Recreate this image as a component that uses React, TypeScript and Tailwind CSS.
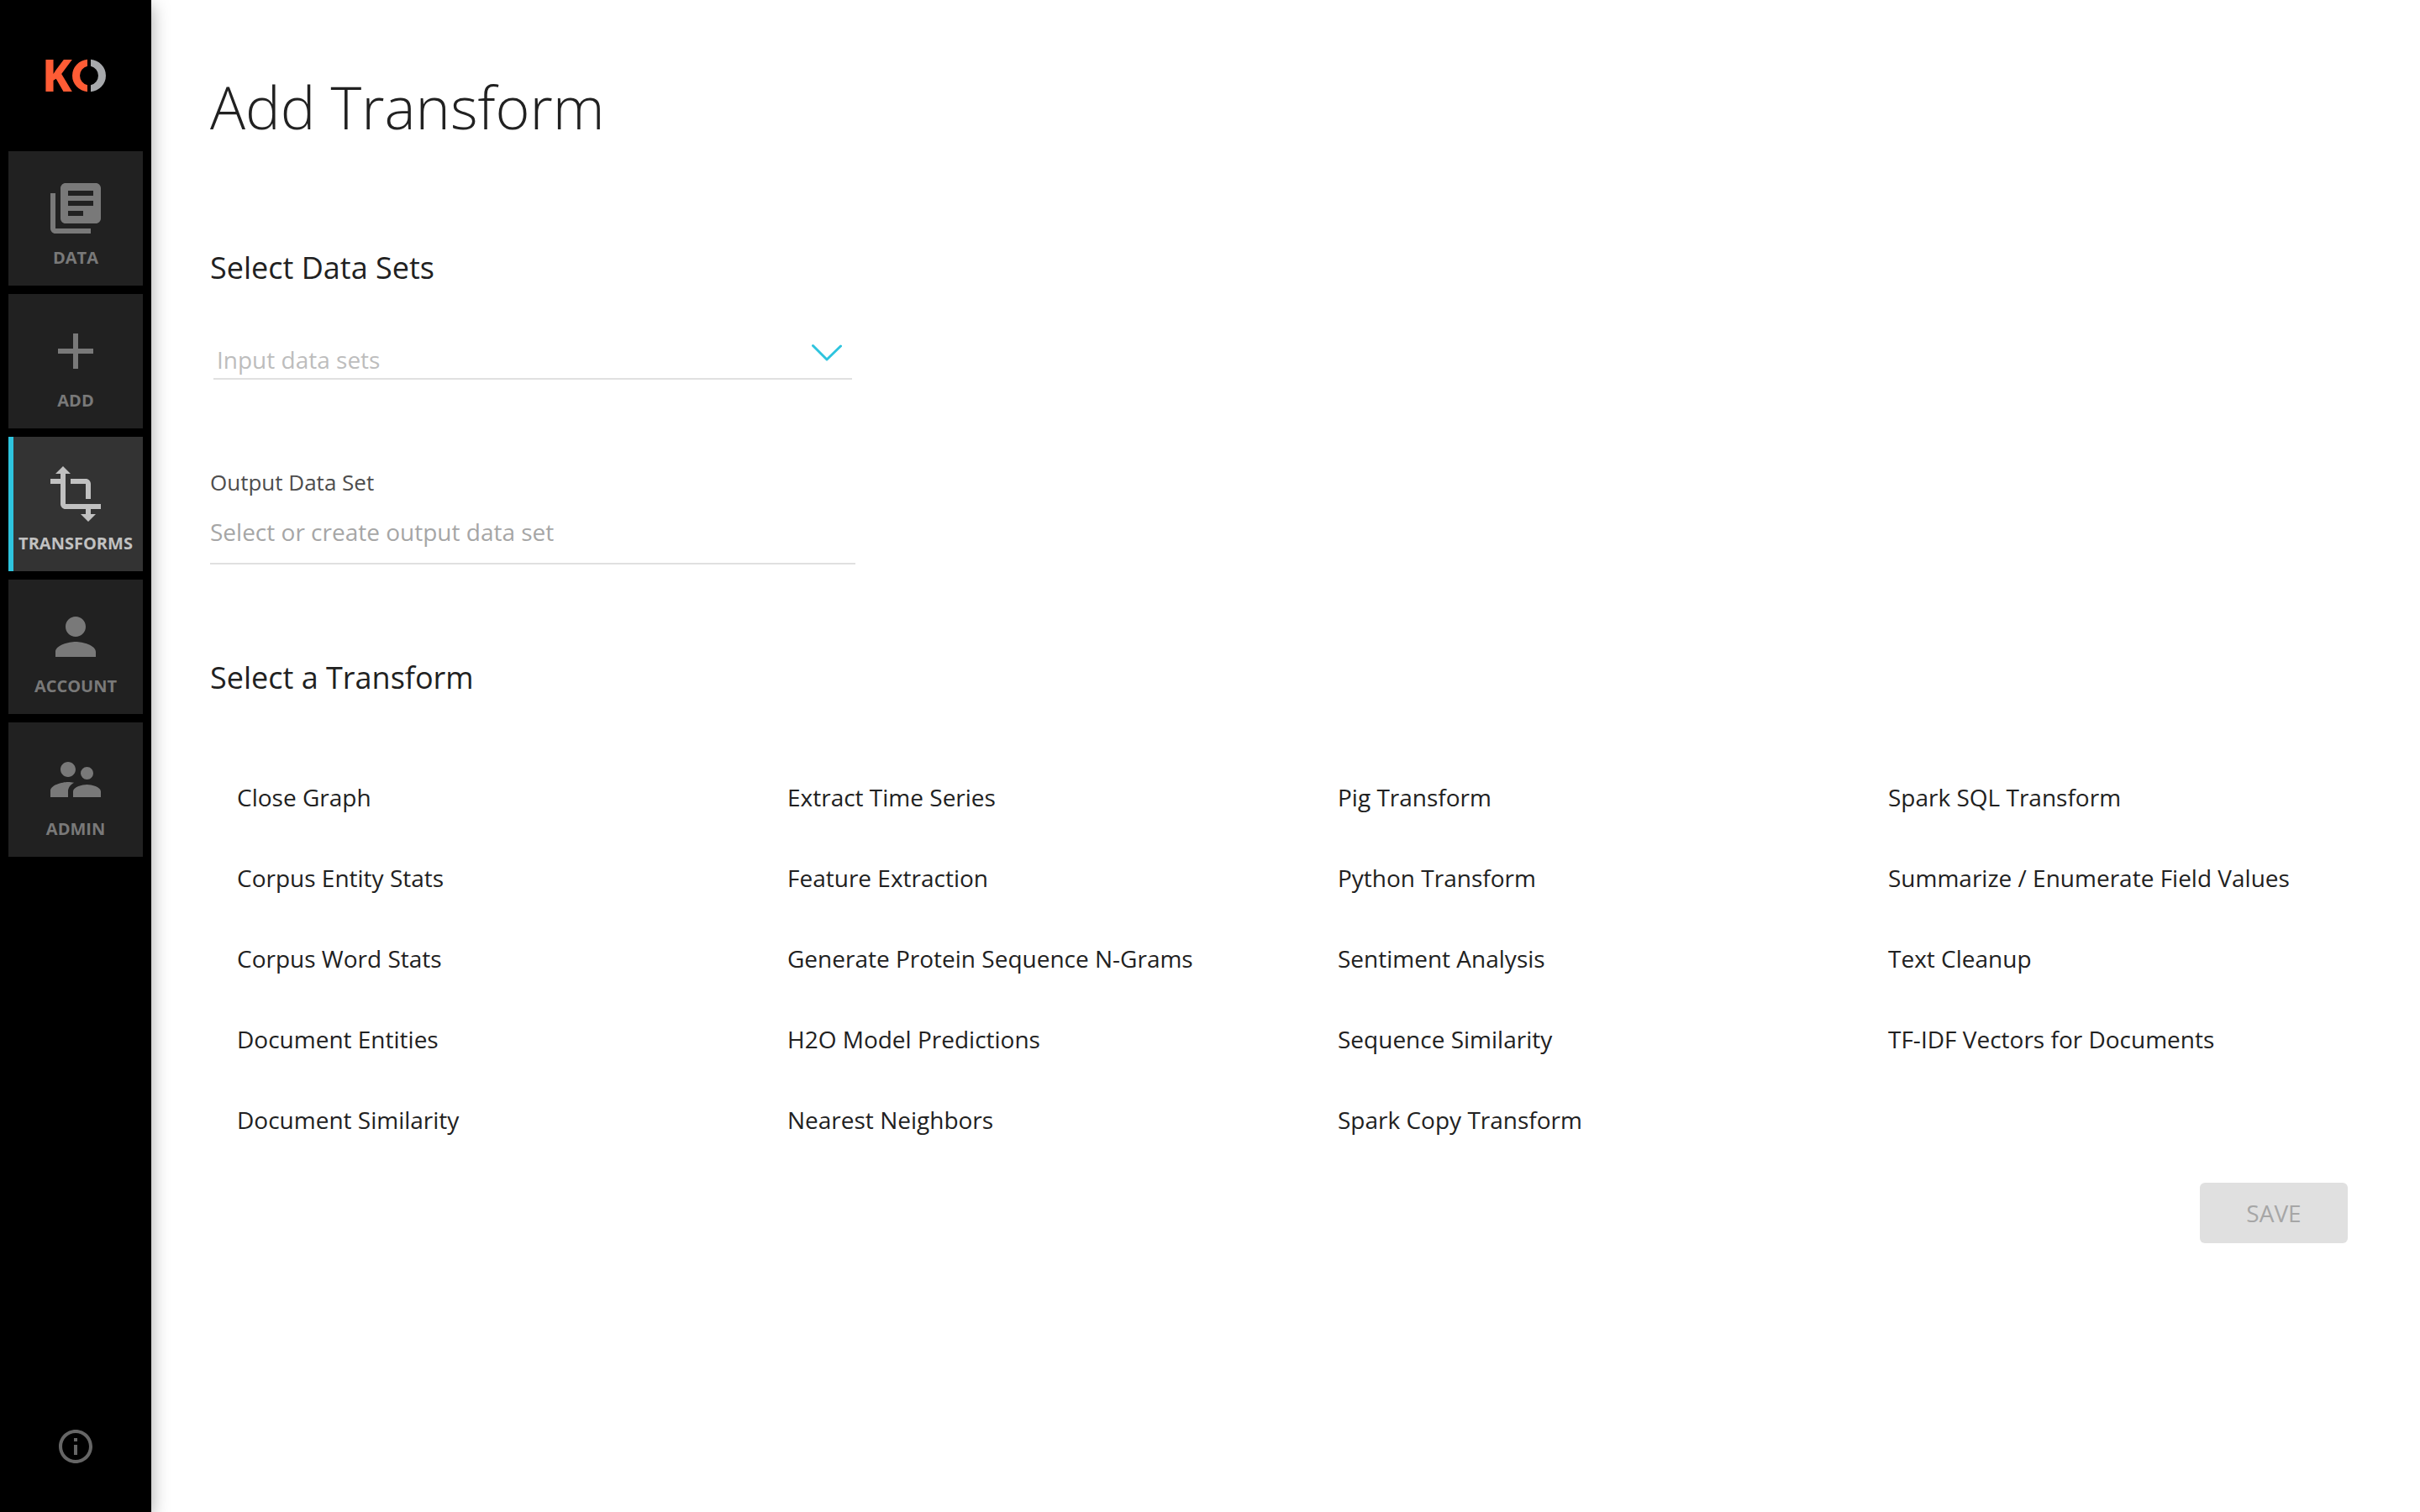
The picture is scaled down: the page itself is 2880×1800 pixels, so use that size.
import type { IconType } from "react-icons";
import {
  MdAdd,
  MdInfoOutline,
  MdLibraryBooks,
  MdPerson,
  MdSupervisorAccount,
  MdTransform,
} from "react-icons/md";

const navItems: { label: string; icon: IconType; active?: boolean }[] = [
  { label: "DATA", icon: MdLibraryBooks },
  { label: "ADD", icon: MdAdd },
  { label: "TRANSFORMS", icon: MdTransform, active: true },
  { label: "ACCOUNT", icon: MdPerson },
  { label: "ADMIN", icon: MdSupervisorAccount },
];

const transforms = [
  "Close Graph",
  "Corpus Entity Stats",
  "Corpus Word Stats",
  "Document Entities",
  "Document Similarity",
  "Extract Time Series",
  "Feature Extraction",
  "Generate Protein Sequence N-Grams",
  "H2O Model Predictions",
  "Nearest Neighbors",
  "Pig Transform",
  "Python Transform",
  "Sentiment Analysis",
  "Sequence Similarity",
  "Spark Copy Transform",
  "Spark SQL Transform",
  "Summarize / Enumerate Field Values",
  "Text Cleanup",
  "TF-IDF Vectors for Documents",
];

function Logo() {
  return (
    <svg viewBox="-6 -20 88 80" className="h-20 w-[88px]" role="img" aria-label="KO">
      <text x="-2" y="39" fill="#ff5c35" fontFamily="Noto Sans, sans-serif" fontSize="53" fontWeight="800">
        K
      </text>
      <path d="M52 .7A20 19.4 0 0 0 52 39.3V31.3A11 11.5 0 0 1 52 8.7Z" fill="#ff5c35" />
      <path d="M56 .7A20 19.4 0 0 1 56 39.3V31.3A11 11.5 0 0 0 56 8.7Z" fill="#a7a9ac" />
    </svg>
  );
}

function NavTile({ label, icon: Icon, active }: (typeof navItems)[number]) {
  return (
    <a
      href="#"
      aria-current={active ? "page" : undefined}
      className={
        "flex h-40 flex-col items-center gap-[9px] pt-8 " +
        (active
          ? "bg-[#333333] text-[#c1c1c1] shadow-[inset_6px_0_0_#2ec4de]"
          : "bg-[#212121] text-[#797979]")
      }
    >
      <Icon className="size-[72px]" aria-hidden="true" />
      <span className="text-[20px] leading-7 font-bold">{label}</span>
    </a>
  );
}

function Sidebar() {
  return (
    <aside className="z-10 flex w-[180px] shrink-0 flex-col items-center bg-black shadow-[0_6px_20px_rgba(0,0,0,0.35)]">
      <a href="#" className="flex h-[180px] items-center">
        <Logo />
      </a>
      <nav className="flex w-full flex-col gap-2.5 px-2.5">
        {navItems.map((item) => (
          <NavTile key={item.label} {...item} />
        ))}
      </nav>
      <button type="button" aria-label="About" className="mt-auto mb-[54px] text-[#666666]">
        <MdInfoOutline className="size-12" />
      </button>
    </aside>
  );
}

export default function App() {
  return (
    <div className="flex min-h-screen bg-white font-['Open_Sans',sans-serif] text-[28px] leading-10 text-[#212121]">
      <Sidebar />
      <main className="flex min-w-0 grow flex-col pt-[79px] pl-[70px]">
        <h1 className="text-[70px] leading-[96px] font-light">Add Transform</h1>

        <h2 className="mt-[120px] text-[36px] leading-[48px]">Select Data Sets</h2>
        <div className="mt-[65px] ml-1 flex w-[760px] items-start border-b-2 border-[#e0e0e0]">
          <input
            type="text"
            aria-label="Input data sets"
            placeholder="Input data sets"
            className="h-[42px] min-w-0 grow px-1 pb-0.5 outline-none placeholder:text-[#bdbdbd]"
          />
          <button type="button" aria-label="Show data sets" className="mr-3 text-[#2ec4de]">
            <svg viewBox="0 0 36 24" className="h-6 w-9" fill="none" stroke="currentColor">
              <path d="M1.5 3.5 18 20 34.500 4" strokeWidth="3" strokeLinecap="round" strokeLinejoin="round" />
            </svg>
          </button>
        </div>

        <label htmlFor="output" className="mt-[102px] text-[26px] text-[#4d4d4d]">
          Output Data Set
        </label>
        <input
          id="output"
          type="text"
          placeholder="Select or create output data set"
          className="mt-[19px] h-[59px] w-[768px] border-b-2 border-[#e0e0e0] pb-[17px] outline-none placeholder:text-[#a6a6a6]"
        />

        <h2 className="mt-[111px] text-[36px] leading-[48px]">Select a Transform</h2>
        <ul className="mt-[70px] mr-2.5 grid grid-flow-col grid-cols-4 grid-rows-[repeat(5,96px)]">
          {transforms.map((name) => (
            <li key={name} className="flex">
              <button type="button" className="grow px-8 text-left">
                {name}
              </button>
            </li>
          ))}
        </ul>

        <button
          type="button"
          disabled
          className="mt-[27px] mr-[86px] h-[72px] w-44 self-end rounded-md bg-[#e0e0e0] text-[#a6a6a6]"
        >
          SAVE
        </button>
      </main>
    </div>
  );
}
